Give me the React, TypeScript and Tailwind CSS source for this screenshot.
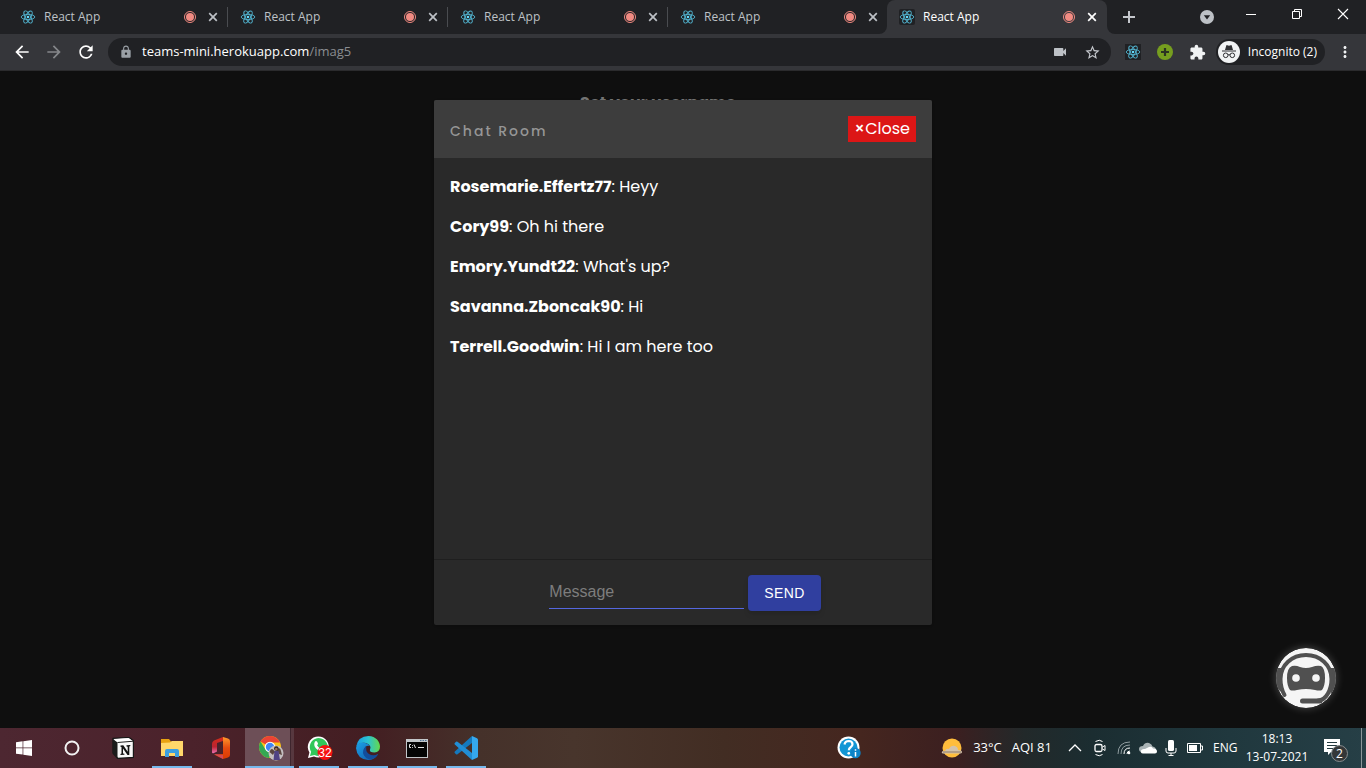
import React from "react";
import {
  MdArrowBack,
  MdArrowForward,
  MdRefresh,
  MdLock,
  MdVideocam,
  MdStarBorder,
  MdExtension,
  MdMoreVert,
} from "react-icons/md";

const messages = [
  { user: "Rosemarie.Effertz77", text: "Heyy" },
  { user: "Cory99", text: "Oh hi there" },
  { user: "Emory.Yundt22", text: "What's up?" },
  { user: "Savanna.Zboncak90", text: "Hi" },
  { user: "Terrell.Goodwin", text: "Hi I am here too" },
];

function ReactLogo({ className = "" }: { className?: string }) {
  return (
    <svg viewBox="0 0 16 16" className={`size-4 shrink-0 ${className}`} fill="none" stroke="#52b4d0" strokeWidth="0.9" aria-hidden="true">
      <ellipse cx="8" cy="8" rx="6.8" ry="2.6" />
      <ellipse cx="8" cy="8" rx="6.8" ry="2.6" transform="rotate(60 8 8)" />
      <ellipse cx="8" cy="8" rx="6.8" ry="2.6" transform="rotate(120 8 8)" />
      <circle cx="8" cy="8" r="1.3" fill="#61dafb" stroke="none" />
    </svg>
  );
}

function RecordDot() {
  return (
    <svg viewBox="0 0 14 14" className="size-3.5 shrink-0" aria-hidden="true">
      <circle cx="7" cy="7" r="5.5" fill="none" stroke="#f28b82" strokeWidth="1" />
      <circle cx="7" cy="7" r="4" fill="#f28b82" />
    </svg>
  );
}

function Tab({ active = false, divider = false }: { active?: boolean; divider?: boolean }) {
  return (
    <div className={`flex h-full w-[220px] items-center pl-3 ${active ? "rounded-t-lg bg-[#35363a] text-white" : "text-[#bdc1c6]"}`}>
      <ReactLogo className={active ? "rounded-xs bg-[#202124]" : ""} />
      <span className="ml-2 flex-1 text-xs">React App</span>
      <RecordDot />
      <button type="button" aria-label="Close tab" className="ml-2 grid size-4 shrink-0 place-items-center">
        <svg viewBox="0 0 10 10" className="size-2.5" stroke="currentColor" strokeWidth="1.7">
          <path d="M1.2 1.2l7.6 7.6M8.8 1.2L1.2 8.8" />
        </svg>
      </button>
      <span className={`ml-1.5 h-5 w-px ${divider ? "bg-[#4a4c50]" : ""}`} />
    </div>
  );
}

function TabStrip() {
  return (
    <div className="flex h-[34px] bg-[#35363a]">
      <div className="flex rounded-br-lg bg-[#202124] pl-2">
        <Tab divider />
        <Tab divider />
        <Tab divider />
        <div className="-mr-px"><Tab /></div>
      </div>
      <div className="flex bg-[linear-gradient(#202124_50%,#35363a_50%)]">
        <Tab active />
      </div>
      <div className="flex flex-1 items-center rounded-bl-lg bg-[#202124] pl-[15px]">
        <button type="button" aria-label="New tab" className="text-[#c4c7cc]">
          <svg viewBox="0 0 14 14" className="size-3.5" stroke="currentColor" strokeWidth="2">
            <path d="M7 1v12M1 7h12" />
          </svg>
        </button>
        <button type="button" aria-label="Search tabs" className="mr-3.5 ml-auto">
          <svg viewBox="0 0 14 14" className="size-3.5">
            <circle cx="7" cy="7" r="7" fill="#bdc1c6" />
            <path d="M3.8 5.2h6.4L7 9.4z" fill="#202124" />
          </svg>
        </button>
        <button type="button" aria-label="Minimize" className="grid w-[46px] place-items-center pb-1.5">
          <svg viewBox="0 0 12 12" className="size-3" stroke="#fff" strokeWidth="1">
            <path d="M1 6.5h10" />
          </svg>
        </button>
        <button type="button" aria-label="Restore" className="grid w-[46px] place-items-center pb-1.5">
          <svg viewBox="0 0 12 12" className="size-3" stroke="#fff" strokeWidth="1" fill="none">
            <path d="M1.5 3.5h7v7h-7zM3.5 3.5v-2h7v7h-2" />
          </svg>
        </button>
        <button type="button" aria-label="Close window" className="grid w-[46px] place-items-center pb-1.5">
          <svg viewBox="0 0 12 12" className="size-3" stroke="#fff" strokeWidth="1.1">
            <path d="M1 1l10 10M11 1L1 11" />
          </svg>
        </button>
      </div>
    </div>
  );
}

function Toolbar() {
  return (
    <div className="flex h-[37px] items-center border-b border-[#2b2b2d] bg-[#35363a] pr-3 pl-3">
      <button type="button" aria-label="Back" className="mr-3 text-white"><MdArrowBack size={20} /></button>
      <button type="button" aria-label="Forward" className="mr-3 text-[#85878a]"><MdArrowForward size={20} /></button>
      <button type="button" aria-label="Reload" className="mr-3 text-white"><MdRefresh size={20} /></button>
      <div className="flex h-7 flex-1 items-center rounded-full bg-[#202124] pr-2.5 pl-[11px]">
        <MdLock size={14} className="mr-[9px] text-[#9aa0a6]" />
        <a href="#" className="flex-1 text-[13px] text-white">
          teams-mini.herokuapp.com<span className="text-[#8a8d91]">/imag5</span>
        </a>
        <MdVideocam size={16} className="mr-4 text-[#bdc1c6]" />
        <button type="button" aria-label="Bookmark this page" className="text-[#c4c7cc]"><MdStarBorder size={17} /></button>
      </div>
      <ReactLogo className="ml-3.5 bg-[#202124]" />
      <svg viewBox="0 0 16 16" className="ml-4 size-4" aria-hidden="true">
        <circle cx="8" cy="8" r="8" fill="#769e1f" />
        <path d="M8 4v8M4 8h8" stroke="#2c3322" strokeWidth="2.2" />
      </svg>
      <MdExtension size={17} className="ml-4 text-[#f1f3f4]" />
      <button type="button" className="ml-2.5 flex h-[26px] items-center gap-2 rounded-full bg-[#202124] pr-2 pl-0.5 text-xs text-white">
        <svg viewBox="0 0 22 22" className="size-[22px]" aria-hidden="true">
          <circle cx="11" cy="11" r="11" fill="#f1f3f4" />
          <path d="M7 9l1.2-4.3q.3-.8 1.1-.5l1.7.5 1.7-.5q.8-.3 1.1.5L15 9zM4 9.4h14v1.2H4z" fill="#303134" />
          <g fill="none" stroke="#303134" strokeWidth="1">
            <circle cx="7.7" cy="14.3" r="2.3" />
            <circle cx="14.3" cy="14.3" r="2.3" />
            <path d="M10 14q1-.8 2 0" />
          </g>
        </svg>
        Incognito (2)
      </button>
      <button type="button" aria-label="Menu" className="ml-[11px] text-[#f1f3f4]"><MdMoreVert size={18} /></button>
    </div>
  );
}

function ChatRoom() {
  return (
    <section role="dialog" aria-label="Chat Room" className="relative mx-4 flex w-full max-w-[498px] flex-col overflow-hidden rounded-xs bg-[#292929] text-white shadow-sm">
      <header className="flex items-start justify-between bg-[#3d3d3d] px-4 py-4">
        <h2 className="pt-[5px] text-sm font-medium tracking-[2px] text-[#969696]">Chat Room</h2>
        <button type="button" className="h-[26px] bg-[#dc1616] px-1.5 text-base leading-[26px]">
          <span className="font-medium">×</span>Close
        </button>
      </header>
      <ul className="flex min-h-[401px] flex-1 flex-col gap-4 px-4 pt-[17px] pb-4">
        {messages.map((m) => (
          <li key={m.user} className="text-base leading-6">
            <b>{m.user}</b>: {m.text}
          </li>
        ))}
      </ul>
      <form className="flex items-start justify-center gap-1 border-t border-[#1f1f1f] pt-[15px] pr-0 pb-3.5 pl-1 font-['Liberation_Sans',Arial,sans-serif]">
        <input
          aria-label="Message"
          placeholder="Message"
          className="h-[34px] w-[195px] border-b border-[#5567e0] bg-transparent text-base outline-none placeholder:text-[#7d7d7d]"
        />
        <button type="button" className="h-9 rounded-sm bg-[#303f9f] px-4 text-sm font-medium tracking-wide shadow-md">
          SEND
        </button>
      </form>
    </section>
  );
}

function BotButton() {
  return (
    <button type="button" aria-label="Open assistant" className="absolute right-[30px] bottom-5 rounded-full shadow-[0_0_8px_#ffffff40]">
      <svg viewBox="0 0 60 60" className="size-[60px]">
        <defs>
          <clipPath id="bot-disc"><circle cx="30" cy="30" r="30" /></clipPath>
        </defs>
        <g clipPath="url(#bot-disc)">
          <circle cx="30" cy="30" r="30" fill="#f5f5f5" />
          <path d="M0 20H5.500V44L0 40ZM60 20H54.500V46L60 42Z" fill="#505050" />
          <path d="M8.500 47Q4.500 40 4.500 31C4.500 17 16 7 30 7S55.500 17 55.500 31C55.500 42 50 52.500 42 52.500" fill="none" stroke="#505050" strokeWidth="4" strokeLinecap="round" />
          <path d="M26.500 53H44" stroke="#505050" strokeWidth="5" strokeLinecap="round" />
          <path d="M16 18Q20 17 24 19Q30 21 36 19Q41 17 45 18Q49 20 49 30Q49 38 46 42Q44 43 39 42Q30 40 21 42Q16 43 14 42Q11 38 11 30Q11 20 16 18Z" fill="#505050" />
          <circle cx="20" cy="30" r="3.8" fill="#f5f5f5" />
          <circle cx="40" cy="30" r="3.8" fill="#f5f5f5" />
        </g>
      </svg>
    </button>
  );
}

function TaskButton({ label, open = false, active = false, children }: { label: string; open?: boolean; active?: boolean; children: React.ReactNode }) {
  return (
    <button type="button" aria-label={label} className={`flex h-full w-[49px] flex-col items-center ${active ? "bg-[linear-gradient(90deg,#6d4f57_45px,#3e252d_45px,#3e252d_46px,#57383f_46px)]" : ""}`}>
      <span className="grid flex-1 place-items-center pt-0.5">{children}</span>
      <span className={`h-0.5 ${active ? "w-full" : "w-10"} ${open ? "bg-[#76b9ed]" : ""}`} />
    </button>
  );
}

function Taskbar() {
  return (
    <footer className="flex h-10 items-center bg-[linear-gradient(90deg,#4d2731_0%,#4b222b_14%,#431e22_27%,#45312a_35%,#48352c_42%,#422d23_53%,#45261f_63%,#3b1f20_70%,#22292a_75%,#1b2d31_80%,#20383e_90%,#263f46_100%)] text-xs text-white">
      <button type="button" aria-label="Start" className="grid h-full w-12 place-items-center">
        <svg viewBox="0 0 16 16" className="size-4" fill="#fff">
          <path d="M0 2.2l6.6-.9v6.2H0zM7.3 1.2L16 0v7.5H7.3zM0 8.3h6.6v6.3L0 13.7zM7.3 8.3H16V16l-8.7-1.2z" />
        </svg>
      </button>
      <button type="button" aria-label="Cortana" className="mr-0.5 grid h-full w-12 place-items-center">
        <svg viewBox="0 0 16 16" className="size-4"><circle cx="8" cy="8" r="6.5" fill="none" stroke="#f2f2f2" strokeWidth="2" /></svg>
      </button>
      <TaskButton label="Notion">
        <svg viewBox="0 0 22 22" className="size-[22px]">
          <path d="M1 1.5L17 .5l4.5 3.3v16.6L5.8 21.5 1 16z" fill="#f7f7f7" stroke="#171717" strokeWidth="1.4" strokeLinejoin="round" />
          <path d="M1 2l4.500 3.500v15.700L1 16z" fill="#1b1b1b" />
          <path d="M1.500 2l15-1 4 3-14.500 1z" fill="#fff" />
          <path d="M5.500 5.500l16-1.300" stroke="#222" strokeWidth="1" />
          <path d="M8.500 8.500l2.800-.2 4.400 6.500V9.700l-1.200-.3V8.200l3.800-.3v1.200l-1 .3v8.500l-1.800.1L11 11.500v5l1.400.3v1L8.500 18v-1l1-.4V10l-1-.3z" fill="#111" />
        </svg>
      </TaskButton>
      <TaskButton label="File Explorer" open>
        <svg viewBox="0 0 22 20" className="h-5 w-[22px]">
          <path d="M0 1h8l2 2.5h12V18H0z" fill="#e8a211" />
          <path d="M0 5l9-.5L11 3h11v15H0z" fill="#ffd76a" />
          <path d="M4 13q0-2 2-2h10q2 0 2 2v6h-4v-4H8v4H4z" fill="#3c9fe0" />
        </svg>
      </TaskButton>
      <TaskButton label="Office">
        <svg viewBox="0 0 20 22" className="h-[22px] w-5">
          <defs>
            <linearGradient id="office-left" x2="0" y2="1"><stop stopColor="#d52c18" /><stop offset=".6" stopColor="#bd2431" /><stop offset="1" stopColor="#ef72b5" /></linearGradient>
            <linearGradient id="office-right" x2="0" y2="1"><stop stopColor="#ff9a2b" /><stop offset=".5" stopColor="#e64a10" /><stop offset="1" stopColor="#d93b01" /></linearGradient>
          </defs>
          <path d="M12 0L3 3.500Q1 4.500 1 7v8q0 2 2 1l3-1.500V6l6-2z" fill="url(#office-left)" />
          <path d="M3 17.500l9-.5V4l0-4 5 1.500Q19 2.200 19 4v14q0 1.800-2 2.500L12 22z" fill="url(#office-right)" />
          <path d="M3 17l9 1v4z" fill="#d04a55" />
        </svg>
      </TaskButton>
      <TaskButton label="Chrome" open active>
        <svg viewBox="0 0 26 26" className="ml-0.5 size-[26px]">
          <circle cx="12" cy="12" r="11" fill="#fbc116" />
          <path d="M12 12L2.500 6.500A11 11 0 0 1 21.500 6.500L22 7.500H12z" fill="#ea4335" />
          <path d="M2.500 6.500A11 11 0 0 0 11 23l4.500-8L7.500 14.500z" fill="#34a853" />
          <circle cx="12" cy="12" r="5.300" fill="#fff" />
          <circle cx="12" cy="12" r="4.200" fill="#4285f4" />
          <circle cx="18" cy="18" r="7.500" fill="#c4bfc0" />
          <path d="M11.500 17q1.500-5 4-2l2 2 2-3q3-2 3.500 2l1 4-3-1-1-2-4 1-1 2z" fill="#5a4640" />
          <circle cx="18.300" cy="13.500" r="2.300" fill="#32241f" />
          <circle cx="18.300" cy="14" r="1.300" fill="#a3735a" />
          <path d="M16.500 16h4l1.500 9h-6.500z" fill="#504384" />
        </svg>
      </TaskButton>
      <TaskButton label="WhatsApp" open>
        <svg viewBox="0 0 26 24" className="ml-0.5 h-6 w-[26px]">
          <path d="M1 22l1.400-5.500A10.500 10.500 0 1 1 7 20.500z" fill="#fff" />
          <path d="M3 20l1.100-4.200A9 9 0 1 1 7.500 19z" fill="#30c75a" />
          <path d="M8 5.500q1-1 2 0l1 2q0 1-1 1.800 1.300 2.500 4 3.400l1.300-1.300 2.700 1.300q.5 2.500-2.500 3-3.500 0-6.500-3.300T8 5.500z" fill="#fff" />
          <circle cx="18" cy="16.500" r="7.500" fill="#f51111" />
          <text x="18" y="20.500" textAnchor="middle" fontSize="12" fill="#fff" fontFamily="Liberation Sans">32</text>
        </svg>
      </TaskButton>
      <TaskButton label="Edge" open>
        <svg viewBox="0 0 24 24" className="size-6">
          <defs>
            <linearGradient id="edge-top"><stop stopColor="#199be2" /><stop offset=".5" stopColor="#2bc3d3" /><stop offset="1" stopColor="#65d94a" /></linearGradient>
            <linearGradient id="edge-low" x2="1" y2="1"><stop stopColor="#1ba1e8" /><stop offset="1" stopColor="#1255a4" /></linearGradient>
          </defs>
          <path d="M0 11Q2 0 12.500 0C20 0 24 6 24 10.500Q24 16 18.500 16.500Q13 16.500 14 13.500Q16 9 10 7Q3 6 0 11z" fill="url(#edge-top)" />
          <path d="M0 12Q1 6.500 7 6.500Q12 7 14 10Q8.500 9 8.500 14Q9 20 15 20.500Q18.500 20.800 22 18Q19 24 12 24Q1 23 0 12z" fill="url(#edge-low)" />
          <path d="M10.500 10Q5 14 8 19.500Q11 24 16 23Q20 22 22.300 18Q17 20.500 13 18Q9 15 10.500 10z" fill="#124d9b" />
        </svg>
      </TaskButton>
      <TaskButton label="Command Prompt" open>
        <svg viewBox="0 0 22 19" className="h-[19px] w-[22px]">
          <path d="M0 0h22v19H0z" fill="#c3c7ca" />
          <path d="M1 3h20v15H1z" fill="#050505" />
          <path d="M14 1.500h1.500M16.500 1.500H18M19 1.500h1.500" stroke="#507498" />
          <path d="M5 5.500H3.500v3H5M6.500 6v.8M6.500 8v.8M8 5.500l1.500 3.500M12 8.500h6" stroke="#e5e5e5" fill="none" />
        </svg>
      </TaskButton>
      <TaskButton label="Visual Studio Code" open>
        <svg viewBox="0 0 24 24" className="size-6">
          <path d="M18 0L.8 15.500q-.8.8 0 1.500L2 18.200q.7.600 1.500 0L18 7z" fill="#1479be" />
          <path d="M18 24L.8 8.500q-.8-.8 0-1.500L2 5.800q.7-.600 1.500 0L18 17z" fill="#218ed5" />
          <path d="M18 0l5 2.300q1 .5 1 1.500v16.400q0 1-1 1.500L18 24z" fill="#35a8ee" />
        </svg>
      </TaskButton>

      <button type="button" aria-label="Get help" className="mr-20 ml-auto">
        <svg viewBox="0 0 24 24" className="size-6">
          <circle cx="11.500" cy="11.500" r="11" fill="#fff" />
          <circle cx="11.500" cy="11.500" r="9" fill="#1296d5" />
          <path d="M7.500 8.500q.5-3.500 4.300-3.500 3.700.2 3.700 3.200 0 1.800-1.900 3-1.800 1.100-1.800 3" fill="none" stroke="#fff" strokeWidth="2.200" />
          <circle cx="11.800" cy="17.300" r="1.400" fill="#fff" />
          <circle cx="18.500" cy="17" r="5.200" fill="#0d83c8" />
          <path d="M18.500 16v4.500M18.500 13.200v1.500" stroke="#fff" strokeWidth="1.500" />
        </svg>
      </button>
      <button type="button" className="flex items-center gap-2.5 text-[13px]">
        <svg viewBox="0 0 22 20" className="h-5 w-[22px]">
          <circle cx="11" cy="10" r="9.500" fill="#ffbd3c" />
          <path d="M3 15.500q-3 0-2-1.800Q2 12.500 4 13q1-3 4-2 2-4 6-3 3 1 3 4 4 0 4 2 0 1.500-3 1.500z" fill="#d4c3ac" />
          <path d="M2 14h18" stroke="#8f7962" />
        </svg>
        <span>33°C</span>
        <span>AQI 81</span>
      </button>
      <button type="button" aria-label="Show hidden icons" className="ml-4">
        <svg viewBox="0 0 14 14" className="size-3.5" fill="none" stroke="#fff" strokeWidth="1.300"><path d="M1 10l6-6 6 6" /></svg>
      </button>
      <svg viewBox="0 0 14 18" className="ml-[11px] h-[18px] w-3.5" fill="none" stroke="#fff" aria-label="Meet now">
        <rect x="2" y="5.500" width="7" height="7" rx="1.500" strokeWidth="1.300" />
        <path d="M9.500 8L12 6.500v5L9.500 10M2.500 2.500q4-2.500 7 0M2.500 15.500q4 2.500 7 0" />
      </svg>
      <svg viewBox="0 0 14 14" className="ml-2.5 size-3.5" fill="none" stroke="#8f9c9f" aria-label="Wi-Fi">
        <path d="M1 13Q1 1 13 1M4 13Q4 4 13 4" />
        <path d="M7 13Q7 7 13 7M10 13Q10 10 13 10" stroke="#fff" />
        <circle cx="12" cy="12" r="1.300" fill="#fff" stroke="none" />
      </svg>
      <svg viewBox="0 0 18 12" className="ml-2 h-3 w-[18px]" aria-label="OneDrive">
        <path d="M3 10Q0 10 0 7t4-3Q6 0 10 1q3 1 3.500 3.500Q17 5 17 8z" fill="#aab4b6" />
        <path d="M4 11.500Q1 11 2 8.500 3 6.500 6 7l4-2q3-1 4 1.500 4 0 4 3 0 2-2 2z" fill="#fff" />
      </svg>
      <svg viewBox="0 0 12 16" className="ml-2 h-4 w-3" fill="none" stroke="#fff" aria-label="Microphone">
        <rect x="3" y="0" width="6" height="11" rx="1.500" fill="#fff" stroke="none" />
        <path d="M1 8v3q0 2 2 2h6q2 0 2-2V8M6 13v2.500M3.500 15.500h5" />
      </svg>
      <svg viewBox="0 0 16 10" className="ml-2.5 h-2.5 w-4" aria-label="Battery">
        <path d="M.5.5h13v9H.5zM14 3h1.500v4H14" fill="none" stroke="#fff" />
        <path d="M2 2h8v6H2z" fill="#fff" />
      </svg>
      <span className="ml-2.5 w-[26px]">ENG</span>
      <button type="button" className="ml-1.5 w-16 text-center leading-[18px]">
        <time>18:13<br />13-07-2021</time>
      </button>
      <button type="button" aria-label="Notifications" className="ml-3.5">
        <svg viewBox="0 0 26 26" className="mt-1 size-[26px]">
          <path d="M1 2h16v13H8l-3 3v-3H1z" fill="#fff" />
          <path d="M4 5.500h10M4 8.500h10M4 11.500h7" stroke="#243b40" />
          <circle cx="16.500" cy="16.500" r="8" fill="#343738" stroke="#888d8f" />
          <text x="16.500" y="20.500" textAnchor="middle" fontSize="12" fill="#fff" fontFamily="Open Sans">2</text>
        </svg>
      </button>
      <span className="mr-1 ml-3 h-full w-px bg-[#8a979a]" />
    </footer>
  );
}

export default function App() {
  return (
    <div className="flex min-h-screen flex-col bg-[#0f0f0f] font-['Open_Sans','Noto_Sans',sans-serif]">
      <TabStrip />
      <Toolbar />
      <main className="relative flex flex-1 flex-col font-['Poppins','Inter',sans-serif]">
        <div className="absolute inset-x-0 top-5 flex justify-center pr-[50px]">
          <h1 className="text-base font-bold text-[#747474]">Set your username</h1>
        </div>
        <div className="flex flex-1 items-start justify-center pt-[29px]">
          <ChatRoom />
        </div>
        <BotButton />
      </main>
      <Taskbar />
    </div>
  );
}
